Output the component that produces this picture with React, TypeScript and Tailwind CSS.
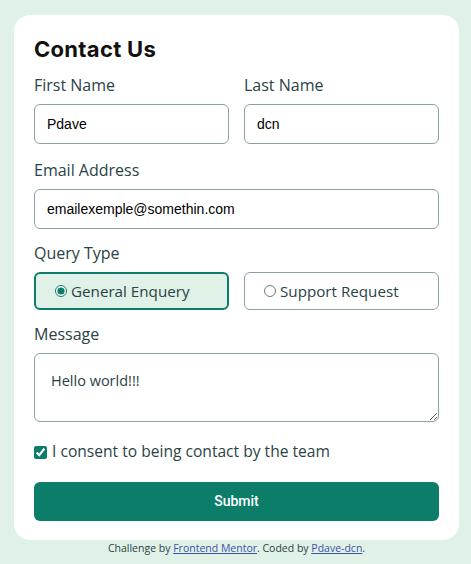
import { useState } from "react";

export default function App() {
  const [query, setQuery] = useState("general");
  const [consent, setConsent] = useState(true);

  const label = "block text-[16px] text-[#2b4246] mb-[9px] leading-[20px]";
  const input =
    "w-full h-10 rounded-md border border-[#87a3a6] px-[12px] text-[14px] text-black outline-none [font-family:'Liberation_Sans',Arial,sans-serif]";
  const radioOn =
    "flex items-center gap-[4px] h-[38px] rounded-md border-2 border-[#0c7d69] bg-[#e0f1e8] pl-[19px] text-[15.2px] text-[#2b4246]";
  const radioOff =
    "flex items-center gap-[4px] h-[38px] rounded-md border border-[#87a3a6] pl-[19px] text-[15.2px] text-[#2b4246]";

  return (
    <div className="min-h-screen bg-[#e0f1e8] pl-[14px] pr-[12px] pt-[15px] [font-family:'Open_Sans',sans-serif]">
      <form className="bg-white rounded-2xl px-5 pt-[20px] pb-[19px]">
        <h1 className="text-[22px] font-bold text-[#111] leading-[28px] tracking-[0.3px] mb-[12px] [font-family:Inter,sans-serif]">
          Contact Us
        </h1>

        <div className="grid grid-cols-2 gap-[15px]">
          <div>
            <label className={label}>First Name</label>
            <input className={input} defaultValue="Pdave" />
          </div>
          <div>
            <label className={label}>Last Name</label>
            <input className={input} defaultValue="dcn" />
          </div>
        </div>

        <div className="mt-[16px]">
          <label className={label}>Email Address</label>
          <input className={input} defaultValue="emailexemple@somethin.com" />
        </div>

        <div className="mt-[14px]">
          <label className={label}>Query Type</label>
          <div className="grid grid-cols-2 gap-[15px]">
            <label className={query === "general" ? radioOn : radioOff}>
              <input
                type="radio"
                name="query"
                checked={query === "general"}
                onChange={() => setQuery("general")}
                className="m-0 w-[12px] h-[12px] accent-[#0c7d69]"
              />
              General Enquery
            </label>
            <label className={query === "support" ? radioOn : radioOff}>
              <input
                type="radio"
                name="query"
                checked={query === "support"}
                onChange={() => setQuery("support")}
                className="m-0 w-[12px] h-[12px] accent-[#0c7d69]"
              />
              Support Request
            </label>
          </div>
        </div>

        <div className="mt-[14px]">
          <label className={label}>Message</label>
          <textarea
            defaultValue="Hello world!!!"
            className="block w-full h-[69px] rounded-md border border-[#87a3a6] px-[16px] pt-[16px] text-[14.5px] leading-[22px] text-[#2b4246] outline-none"
          />
        </div>

        <label className="flex items-center gap-[5px] mt-[20px] h-[20px] text-[15.6px] text-[#2b4246]">
          <input
            type="checkbox"
            checked={consent}
            onChange={() => setConsent(!consent)}
            className="m-0 w-[13px] h-[13px] accent-[#0c7d69]"
          />
          I consent to being contact by the team
        </label>

        <button
          type="button"
          className="mt-[20px] w-full h-[39px] rounded-md bg-[#0c7d69] text-white text-[14px] font-medium [font-family:Roboto,sans-serif]"
        >
          Submit
        </button>
      </form>

      <p className="text-center text-[10.5px] leading-[14px] text-[#2b4246] mt-[1px]">
        Challenge by{" "}
        <a href="#" className="underline text-[#3e52a3]">
          Frontend Mentor
        </a>
        . Coded by{" "}
        <a href="#" className="underline text-[#3e52a3]">
          Pdave-dcn
        </a>
        .
      </p>
    </div>
  );
}
